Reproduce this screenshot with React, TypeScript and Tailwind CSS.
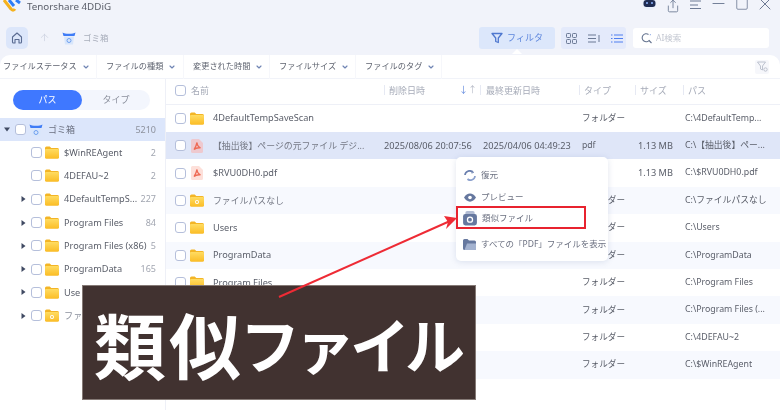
import { ChevronDown, Minus, Square, X, Share, ArrowUp } from 'lucide-react';

const font = "font-['Noto_Sans','Noto_Sans_CJK_JP',sans-serif]";

type Row = {
  name: string;
  icon: 'folder' | 'pdf' | 'lost';
  deleted?: string;
  modified?: string;
  type?: string;
  size?: string;
  path?: string;
  bg: string;
};

// the last three names sit behind the banner, so they are left out
const rows: Row[] = [
  { name: '4DefaultTempSaveScan', icon: 'folder', type: 'フォルダー', path: 'C:\\4DefaultTemp...', bg: 'bg-white' },
  { name: '【抽出後】ページの元ファイル デジ...', icon: 'pdf', deleted: '2025/08/06 20:07:56', modified: '2025/04/06 04:49:23', type: 'pdf', size: '1.13 MB', path: 'C:\\【抽出後】ペー...', bg: 'bg-[#dfe6f8]' },
  { name: '$RVU0DH0.pdf', icon: 'pdf', size: '1.13 MB', path: 'C:\\$RVU0DH0.pdf', bg: 'bg-white' },
  { name: 'ファイルパスなし', icon: 'lost', type: 'フォルダー', path: 'C:\\ファイルパスなし', bg: 'bg-[#f7f9fe]' },
  { name: 'Users', icon: 'folder', type: 'フォルダー', path: 'C:\\Users', bg: 'bg-white' },
  { name: 'ProgramData', icon: 'folder', type: 'フォルダー', path: 'C:\\ProgramData', bg: 'bg-[#f7f9fe]' },
  { name: 'Program Files', icon: 'folder', type: 'フォルダー', path: 'C:\\Program Files', bg: 'bg-white' },
  { name: '', icon: 'folder', type: 'フォルダー', path: 'C:\\Program Files (...', bg: 'bg-[#f7f9fe]' },
  { name: '', icon: 'folder', type: 'フォルダー', path: 'C:\\4DEFAU~2', bg: 'bg-white' },
  { name: '', icon: 'folder', type: 'フォルダー', path: 'C:\\$WinREAgent', bg: 'bg-[#f7f9fe]' },
];

const tree = [
  { name: '$WinREAgent', count: '2', caret: false, icon: 'folder' },
  { name: '4DEFAU~2', count: '2', caret: false, icon: 'folder' },
  { name: '4DefaultTempS...', count: '227', caret: true, icon: 'folder' },
  { name: 'Program Files', count: '84', caret: true, icon: 'folder' },
  { name: 'Program Files (x86)', count: '5', caret: true, icon: 'folder' },
  { name: 'ProgramData', count: '165', caret: true, icon: 'folder' },
  { name: 'Use', count: '', caret: true, icon: 'folder' },
  { name: 'ファ', count: '', caret: true, icon: 'lost' },
];

const filters = [
  { label: 'ファイルステータス', w: 'w-[97px]' },
  { label: 'ファイルの種類', w: 'w-[87px]' },
  { label: '変更された時間', w: 'w-[86px]' },
  { label: 'ファイルサイズ', w: 'w-[86px]' },
  { label: 'ファイルのタグ', w: 'w-[86px]' },
];

function Folder({ lost }: { lost?: boolean }) {
  return (
    <svg width="14" height="13" viewBox="0 0 14 13" className="shrink-0">
      <defs>
        <linearGradient id="fold" x1="0" y1="0" x2="0" y2="1">
          <stop offset="0" stopColor="#ffdc62" />
          <stop offset="1" stopColor="#fbbd26" />
        </linearGradient>
      </defs>
      <path d="M0 2a1.500 1.500 0 0 1 1.500-1.500h3.200L6.300 2h6.200A1.500 1.500 0 0 1 14 3.500V11a1.500 1.500 0 0 1-1.500 1.500h-11A1.500 1.500 0 0 1 0 11z" fill="#f3b526" />
      <path d="M0 4a1 1 0 0 1 1-1h12a1 1 0 0 1 1 1v7a1.500 1.500 0 0 1-1.500 1.500h-11A1.500 1.500 0 0 1 0 11z" fill="url(#fold)" />
      {lost && <circle cx="7" cy="8" r="2" fill="#fff" />}
      {lost && <circle cx="7" cy="8" r="0.9" fill="#f5b81f" />}
    </svg>
  );
}

function Pdf({ dark }: { dark?: boolean }) {
  return (
    <svg width="12" height="14" viewBox="0 0 12 14" className="shrink-0">
      <path d="M1.500 0H8l4 4v8.500a1.500 1.500 0 0 1-1.500 1.500h-9A1.500 1.500 0 0 1 0 12.500v-11A1.500 1.500 0 0 1 1.500 0z" fill={dark ? '#eec9cf' : '#fde0da'} />
      <path d="M6 3.500c.2 2.500 1.500 4.500 3.500 5.300-2-.2-5 .2-6.500 1.700 1.200-1.800 2.500-4.500 3-7z" fill="none" stroke="#ee6a55" strokeWidth="1.300" />
    </svg>
  );
}

function TrashBin() {
  return (
    <svg width="14" height="14" viewBox="0 0 14 14" className="shrink-0">
      <path d="M0.500 1.500c2 1.700 11 1.700 13 0L12.500 5H1.500z" fill="#3f7cf6" />
      <path d="M2 5.500h10L11 13.500H3z" fill="#d8e6fb" />
      <path d="M5 9.500a2 2 0 1 1 4 0 2 2 0 0 1-4 0z" fill="none" stroke="#6fa0f0" strokeWidth="1" />
    </svg>
  );
}

function Box() {
  return <span className="block w-[11px] h-[11px] shrink-0 rounded-[3px] border border-[#b5bfdb] bg-white" />;
}

function Caret({ open }: { open?: boolean }) {
  return open ? (
    <svg width="6" height="5" viewBox="0 0 6 5" className="shrink-0"><path d="M0 .5h6L3 4.500z" fill="#404a63" /></svg>
  ) : (
    <svg width="5" height="6" viewBox="0 0 5 6" className="shrink-0"><path d="M.5 0v6L4.500 3z" fill="#404a63" /></svg>
  );
}

function Th({ label, w, pad, children }: { label: string; w: string; pad: string; children?: React.ReactNode }) {
  return (
    <div className={`${w} ${pad} flex items-center h-[10px] border-l border-[#e6e9f3] text-[9px] text-[#a6abb8]`}>
      <span>{label}</span>
      {children}
    </div>
  );
}

export default function App() {
  return (
    <div className={`relative w-[780px] h-[410px] overflow-hidden flex flex-col bg-[#f1f3fa] text-[#50545f] blur-[0.35px] ${font}`}>
      {/* title bar */}
      <div className="h-[27px] shrink-0 flex items-start">
        <svg width="18" height="13" viewBox="0 0 18 13" className="ml-[3px]">
          <path d="M1 0l7 9c1 1.500 3 1.500 4 0" fill="none" stroke="#f5b21f" strokeWidth="3" />
          <path d="M6 0l5 6" fill="none" stroke="#2f7df6" strokeWidth="3" />
          <path d="M13 0l4 3" fill="none" stroke="#2f7df6" strokeWidth="3" />
        </svg>
        <span className="ml-[6px] mt-[1px] text-[9.800px] leading-[12px] text-[#5a5e69]">Tenorshare 4DDiG</span>
        <div className="ml-auto mr-[4px] flex items-start text-[#6d7a94]">
          <span className="w-[23px] flex justify-center">
            <svg width="15" height="13" viewBox="0 0 15 13">
              <circle cx="7.500" cy="3" r="7" fill="#eaf0fb" />
              <rect x="1.500" y="0" width="12" height="7" rx="3" fill="#1f2c52" />
              <circle cx="5" cy="3" r="1" fill="#8fb4ff" />
              <circle cx="10" cy="3" r="1" fill="#8fb4ff" />
            </svg>
          </span>
          <span className="w-[23px] flex justify-center"><Share size={14} strokeWidth={1.500} className="-mt-[1px]" /></span>
          <span className="w-[23px] flex justify-center">
            <svg width="12" height="10" viewBox="0 0 12 10"><path d="M0 1h11M0 5h8M0 8.500h11" stroke="currentColor" strokeWidth="1.100" /></svg>
          </span>
          <span className="w-[23px] flex justify-center"><Minus size={19} strokeWidth={1.200} className="-mt-[6.500px] shrink-0" /></span>
          <span className="w-[23px] flex justify-center"><Square size={14} strokeWidth={1.400} className="-mt-[3px] shrink-0" /></span>
          <span className="w-[23px] flex justify-center"><X size={20} strokeWidth={1.200} className="-mt-[6px] shrink-0" /></span>
        </div>
      </div>

      {/* toolbar */}
      <div className="h-[28px] shrink-0 flex items-start">
        <div className="ml-[6px] w-[22px] h-[22px] rounded-[5px] bg-[#dce6fa] flex items-center justify-center">
          <svg width="12" height="12" viewBox="0 0 12 12"><path d="M1.500 5L6 1l4.500 4v5a1 1 0 0 1-1 1H8V7.500H4V11H2.500a1 1 0 0 1-1-1z" fill="none" stroke="#5a6b92" strokeWidth="1.100" strokeLinejoin="round" /></svg>
        </div>
        <ArrowUp size={11} strokeWidth={1.500} className="ml-[11px] mt-[5px] text-[#c9cfdd]" />
        <div className="ml-[12px] mt-[4px]"><TrashBin /></div>
        <span className="ml-[7px] mt-[5px] text-[8.500px] leading-[12px] text-[#a9aebb]">ゴミ箱</span>

        <div className="relative ml-auto w-[76px] h-[22px] rounded-[3px] bg-[#dce7fb] flex items-center justify-center gap-[4px] text-[#5d86dd]">
          <svg width="12" height="12" viewBox="0 0 12 12"><path d="M1 1.500h10L7.300 6v4.500L4.700 9.500V6z" fill="none" stroke="#4f78cf" strokeWidth="1.300" strokeLinejoin="round" /></svg>
          <span className="text-[9px] leading-[12px]">フィルタ</span>
          <span className="absolute left-[38px] top-[22px] -translate-x-1/2 w-0 h-0 border-l-[5px] border-r-[5px] border-b-[5px] border-l-transparent border-r-transparent border-b-white" />
        </div>
        <div className="ml-[6px] w-[65px] h-[22px] rounded-[3px] bg-[#e4eafb] flex items-center pl-[5px] gap-[11px]">
          <svg width="11" height="11" viewBox="0 0 11 11" fill="none" stroke="#6a7894"><rect x=".5" y=".5" width="4" height="4" rx=".8" /><rect x="6.500" y=".5" width="4" height="4" rx=".8" /><rect x=".5" y="6.500" width="4" height="4" rx=".8" /><rect x="6.500" y="6.500" width="4" height="4" rx=".8" /></svg>
          <svg width="12" height="9" viewBox="0 0 12 9" stroke="#6a7894"><path d="M0 1h8M0 4.500h8M0 8h8M11 1v7" /></svg>
          <svg width="12" height="9" viewBox="0 0 12 9" stroke="#4f7ef0"><path d="M0 1h1.500M3 1h9M0 4.500h1.500M3 4.500h9M0 8h1.500M3 8h9" /></svg>
        </div>
        <div className="ml-[7px] mr-[11px] mt-[1px] w-[136px] h-[20px] rounded-[3px] bg-white flex items-center pl-[8px] gap-[4px]">
          <svg width="11" height="11" viewBox="0 0 11 11" fill="none" stroke="#64738f" strokeWidth="1.100"><path d="M7.500 1.500A4 4 0 1 0 8.500 7M8 7.500l2.500 2.500" /><path d="M9 1.500l.5.5" stroke="#5d86dd" /></svg>
          <span className="text-[8.500px] text-[#c3c7d1]">AI検索</span>
        </div>
      </div>

      {/* main panel */}
      <div className="flex-1 min-h-0 flex flex-col bg-white rounded-t-[10px]">
        <div className="h-[24px] shrink-0 flex items-center border-b border-[#f1f3f9]">
          {filters.map((f, i) => (
            <div key={f.label} className={`${f.w} h-[24px] flex items-center border-r border-[#f6f7fb] ${i === 0 ? 'pl-[3px]' : 'pl-[9px]'} gap-[5px]`}>
              <span className="text-[8.200px] text-[#5f6470] whitespace-nowrap">{f.label}</span>
              <ChevronDown size={8} strokeWidth={3.500} className="text-[#6f84b3]" />
            </div>
          ))}
          <div className="ml-auto mr-[11px] w-[14px] h-[14px] rounded-[2px] bg-[#f6f7fb] flex items-center justify-center">
            <svg width="11" height="11" viewBox="0 0 11 11" fill="none" stroke="#b7bcc9" strokeWidth=".9"><path d="M.5 1h8L5.500 5v4L3.500 8V5z" /><circle cx="8.500" cy="8.500" r="1.700" /></svg>
          </div>
        </div>

        <div className="flex-1 min-h-0 flex">
          {/* sidebar */}
          <div className="w-[166px] shrink-0 border-r border-[#eef0f7]">
            <div className="ml-[13px] mt-[11px] w-[137px] h-[20px] rounded-full bg-[#f3f6fd] flex text-[9px]">
              <div className="w-[69px] rounded-full bg-[#3f78ff] text-white flex items-center justify-center">パス</div>
              <div className="flex-1 flex items-center justify-center text-[#8b909d]">タイプ</div>
            </div>
            <div className="mt-[8px] h-[23px] bg-[#dce6fb] flex items-center pl-[4px] pr-[9px]">
              <Caret open />
              <span className="ml-[5px]"><Box /></span>
              <span className="ml-[3px]"><TrashBin /></span>
              <span className="ml-[5px] text-[9px] text-[#6b7080]">ゴミ箱</span>
              <span className="ml-auto text-[9px] text-[#8d919d]">5210</span>
            </div>
            {tree.map((t) => (
              <div key={t.name} className="h-[23.300px] flex items-center pr-[9px]">
                <span className="w-[31px] pl-[21px] shrink-0">{t.caret && <Caret />}</span>
                <Box />
                <span className="ml-[3px]"><Folder lost={t.icon === 'lost'} /></span>
                <span className={`ml-[5px] whitespace-nowrap text-[9.200px] ${t.icon === 'lost' ? 'text-[#8b909d]' : 'text-[#5a5e69]'}`}>{t.name}</span>
                <span className="ml-auto text-[9px] text-[#a2a6b1]">{t.count}</span>
              </div>
            ))}
          </div>

          {/* table */}
          <div className="flex-1 min-w-0 flex flex-col">
            <div className="h-[25.600px] shrink-0 flex items-center pb-[2px] border-b border-[#eef0f7]">
              <div className="w-[218px] shrink-0 flex items-center pl-[9px] gap-[5px]">
                <Box />
                <span className="text-[9px] text-[#a6abb8]">名前</span>
              </div>
              <Th label="削除日時" w="w-[96px]" pad="pl-[4px]">
                <span className="ml-auto mr-[3px] text-[9px] leading-[10px]"><span className="text-[#5d86dd]">↓</span><span className="text-[#b8bcc8]">↑</span></span>
              </Th>
              <Th label="最終更新日時" w="w-[99px]" pad="pl-[5px]" />
              <Th label="タイプ" w="w-[56px]" pad="pl-[4px]" />
              <Th label="サイズ" w="w-[48px]" pad="pl-[4px]" />
              <Th label="パス" w="w-[90px]" pad="pl-[4px]" />
            </div>
            {rows.map((r, i) => (
              <div key={i} className={`${r.bg} h-[27.400px] shrink-0 flex items-center text-[9.200px] text-[#5a5e69] whitespace-nowrap`}>
                <div className="w-[218px] shrink-0 flex items-center pl-[9px] overflow-hidden">
                  <Box />
                  <span className="w-[18px] ml-[4px] flex shrink-0">
                    {r.icon === 'pdf' ? <span className="ml-[1px]"><Pdf dark={r.bg === 'bg-[#dfe6f8]'} /></span> : <Folder lost={r.icon === 'lost'} />}
                  </span>
                  <span className={`ml-[5px] ${r.icon === 'folder' || r.name.endsWith('.pdf') ? 'text-[9.200px]' : 'text-[8.900px] text-[#757985]'}`}>{r.name}</span>
                </div>
                <span className="w-[99px] shrink-0">{r.deleted}</span>
                <span className="w-[99px] shrink-0">{r.modified}</span>
                <span className="w-[56px] shrink-0 text-[8.600px]">{r.type}</span>
                <span className="w-[47px] shrink-0">{r.size}</span>
                <span className="text-[8.800px]">{r.path}</span>
              </div>
            ))}
          </div>
        </div>
      </div>

      {/* context menu */}
      <div className="absolute left-[456px] top-[157px] w-[152px] h-[104px] rounded-[5px] bg-white shadow-[0_1px_6px_rgba(90,110,160,0.18)] text-[8.500px] text-[#6b7080]">
        <div className="absolute left-[8px] top-[12px] flex items-center gap-[5px] h-[12px]">
          <svg width="12" height="11" viewBox="0 0 12 11" fill="none" stroke="#6a7fae" strokeWidth="1.700"><path d="M1 5a4.500 4.500 0 0 1 7.500-3" /><path d="M11 6a4.500 4.500 0 0 1-7.500 3" stroke="#8ba0cd" /><path d="M8 .5l1.500 2-2 .5" strokeWidth="1" /></svg>
          復元
        </div>
        <div className="absolute left-[8px] top-[34px] flex items-center gap-[5px] h-[12px]">
          <svg width="12" height="9" viewBox="0 0 12 9"><path d="M0 4.500C3 -1 9 -1 12 4.500 9 10 3 10 0 4.500z" fill="#66789f" /><circle cx="6" cy="4.500" r="1.800" fill="#fff" /></svg>
          プレビュー
        </div>
        <div className="absolute left-[7px] top-[55px] flex items-center gap-[5px] h-[13px]">
          <svg width="14" height="15" viewBox="0 0 12 13"><rect x="2" y="0" width="8" height="4" rx="1.500" fill="#b3bdd4" /><rect x="0" y="2.500" width="12" height="10" rx="2" fill="#66789f" /><circle cx="6" cy="7.500" r="2.200" fill="none" stroke="#fff" strokeWidth="1.100" /></svg>
          類似ファイル
        </div>
        <div className="absolute left-[7px] top-[81px] flex items-center gap-[5px] h-[12px] whitespace-nowrap">
          <svg width="13" height="11" viewBox="0 0 13 11"><path d="M0 1.500A1.500 1.500 0 0 1 1.500 0h3L6 1.500h5.500A1.500 1.500 0 0 1 13 3v6.500a1.500 1.500 0 0 1-1.500 1.500h-10A1.500 1.500 0 0 1 0 9.500z" fill="#66789f" /><path d="M1.500 11L4 4.500h9V9.500a1.500 1.500 0 0 1-1.500 1.500z" fill="#a3b2d0" /></svg>
          すべての「PDF」ファイルを表示
        </div>
      </div>

      {/* red highlight */}
      <div className="absolute left-[456px] top-[206px] w-[130px] h-[23px] border-2 border-[#e8232f]" />

      {/* banner */}
      <div className="absolute left-[82px] top-[285px] w-[394px] h-[115px] bg-[#413230] border border-[#857a76] flex items-center pl-[11px] font-['Noto_Sans_CJK_JP',sans-serif] font-bold text-white leading-none whitespace-nowrap">
        <span className="text-[72px] tracking-[3px]">類似</span>
        <span className="text-[60px] tracking-[-5px] ml-[-4px]">ファイル</span>
      </div>

      {/* arrow */}
      <svg width="780" height="410" viewBox="0 0 780 410" className="absolute left-0 top-0 pointer-events-none">
        <path d="M279 297L450 221" stroke="#ee2b35" strokeWidth="2" />
        <path d="M457 218L444 216L448 222L446 229z" fill="#ee2b35" />
      </svg>
    </div>
  );
}
